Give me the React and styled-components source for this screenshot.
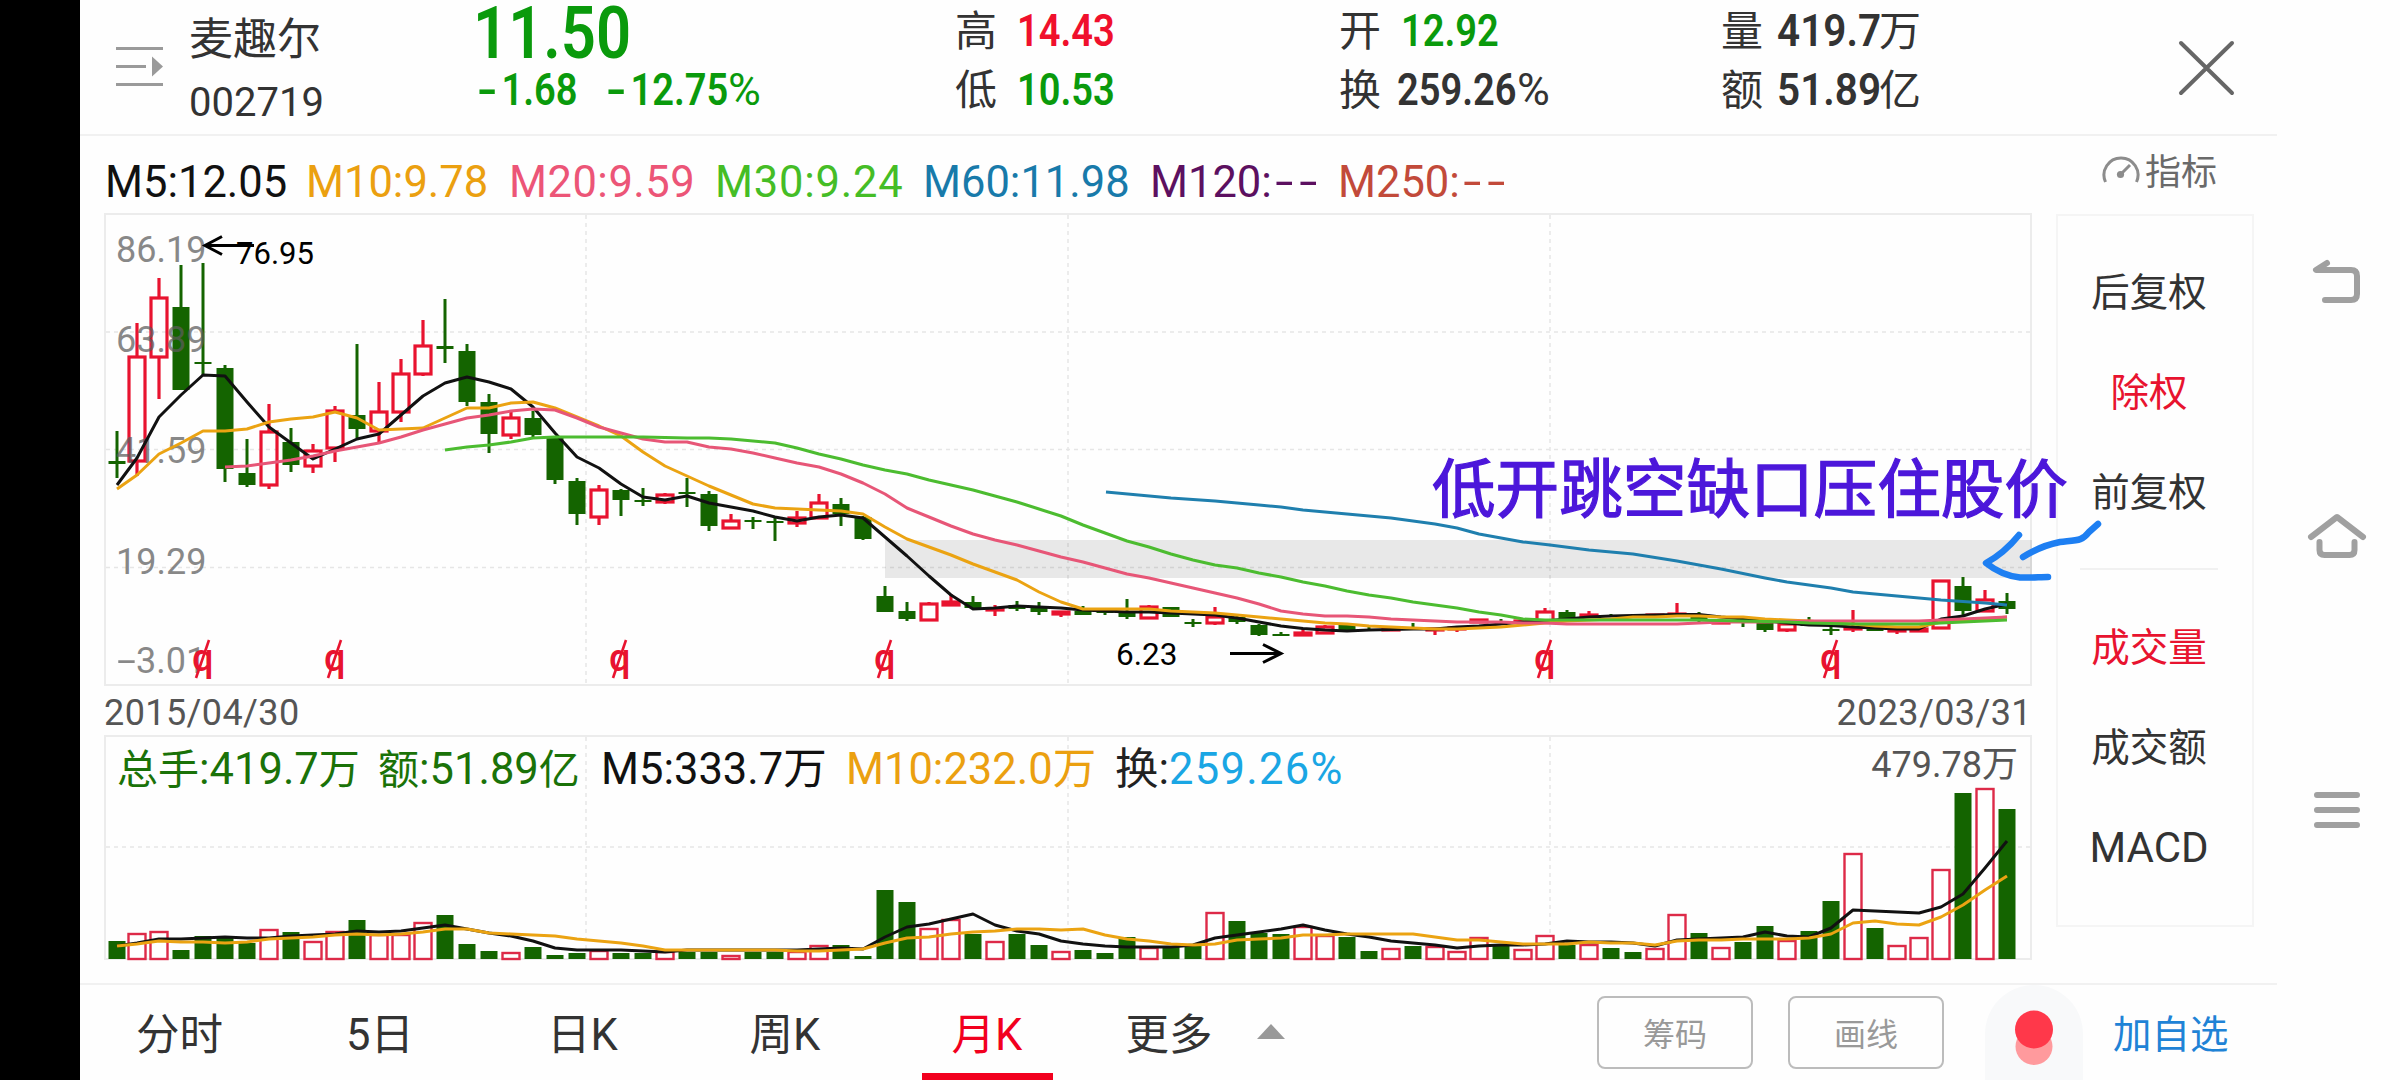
import React from "react";
import styled, { createGlobalStyle } from "styled-components";

const GlobalStyle = createGlobalStyle`
  * {
    box-sizing: border-box;
  }
  body {
    margin: 0;
    background: #fefefe;
    overflow: hidden;
    font-family: Roboto, "Noto Sans CJK SC", sans-serif;
  }
`;

const UP = "#e8132f";
const DOWN = "#146400";

const Screen = styled.div`
  width: 2400px;
  height: 1080px;
  display: flex;
  background: #fefefe;
  overflow: hidden;
`;

const Notch = styled.div`
  width: 80px;
  background: #000;
`;

const Main = styled.main`
  width: 2197px;
  display: flex;
  flex-direction: column;
`;

const Header = styled.header`
  height: 136px;
  padding-left: 36px;
  display: grid;
  grid-template-columns: 73px 284px 482px 384px 382px 457px 60px;
  border-bottom: 2px solid #f1f1f1;
`;

const MenuIcon = styled.svg`
  width: 48px;
  height: 40px;
  margin-top: 46px;
`;

const CloseIcon = styled.svg`
  width: 58px;
  height: 58px;
  margin-top: 39px;
`;

const Column = styled.div`
  display: flex;
  flex-direction: column;
  padding-top: ${(p) => p.$top || 0}px;
  white-space: nowrap;
`;

const Line = styled.div`
  display: flex;
  height: ${(p) => p.$height}px;
  line-height: ${(p) => p.$height}px;
  font-size: ${(p) => p.$size || 44}px;
  color: ${(p) => p.$color || "#333"};
`;

const Figure = styled.span`
  width: ${(p) => p.$width}px;
  font-weight: ${(p) => p.$weight || 600};
  color: ${(p) => p.$color || "#333"};
  transform: scaleX(${(p) => p.$squeeze || 0.865});
  transform-origin: left center;
`;

const QuoteLabel = styled.span`
  width: ${(p) => p.$width || 62}px;
  font-size: 42px;
`;

const Dash = styled.span`
  display: inline-block;
  width: ${(p) => p.$width || 24.5}px;
  text-align: center;
  transform: scaleX(1.5);
`;

const Body = styled.section`
  display: flex;
  height: 847px;
  padding-left: 24px;
`;

const Charts = styled.div`
  width: 1928px;
  display: flex;
  flex-direction: column;
`;

const Averages = styled.div`
  height: 77px;
  line-height: 93px;
  padding-left: 1px;
  display: grid;
  grid-template-columns: 201px 203px 206px 208px 227px 188px auto;
  font-size: 43.5px;
  letter-spacing: 0.2px;
  white-space: nowrap;
`;

const Tinted = styled.span`
  color: ${(p) => p.$color};
  letter-spacing: ${(p) => p.$spacing || 0}px;
`;

const Small = styled.span`
  font-size: 41px;
`;

const PricePanel = styled.div`
  position: relative;
  z-index: 1;
  height: 473px;
  border: 2px solid #ececec;
`;

const VolumePanel = styled.div`
  position: relative;
  height: 225px;
  border: 2px solid #ececec;
`;

const Plot = styled.svg`
  display: block;
  width: 1924px;
  height: ${(p) => p.$height}px;
  overflow: visible;
`;

const DateRow = styled.div`
  height: 49px;
  line-height: 55px;
  display: flex;
  justify-content: space-between;
  font-size: 36px;
  letter-spacing: 0.4px;
  color: #555;
`;

const VolumeLegend = styled.div`
  position: absolute;
  top: 0;
  left: 11px;
  line-height: 66px;
  display: grid;
  grid-template-columns: 261px 223px 245px 269px auto;
  font-size: 43.5px;
  white-space: nowrap;
`;

const VolumeMax = styled.div`
  position: absolute;
  top: 0;
  right: 12px;
  line-height: 57px;
  font-size: 36px;
  color: #555;
`;

const Side = styled.aside`
  width: 198px;
  margin-left: 24px;
`;

const IndicatorButton = styled.div`
  height: 78px;
  padding: 0 0 12px 46px;
  display: flex;
  align-items: center;
  gap: 5px;
  font-size: 36px;
  color: #6a6a6a;
`;

const SideMenu = styled.div`
  height: 713px;
  padding: 25px 34px 0 22px;
  border: 2px solid #f5f5f5;
`;

const SideGroup = styled.div`
  padding-top: ${(p) => p.$top || 0}px;
  border-bottom: ${(p) => (p.$last ? "none" : "2px solid #f1f1f1")};
  height: ${(p) => p.$height}px;
`;

const SideItem = styled.div`
  height: 100px;
  line-height: 104px;
  display: flex;
  justify-content: center;
  white-space: nowrap;
  font-size: ${(p) => (p.$latin ? 42 : 38.5)}px;
  color: ${(p) => (p.$active ? UP : "#333")};
`;

const Footer = styled.footer`
  height: 97px;
  display: flex;
  align-items: center;
  border-top: 2px solid #f1f1f1;
`;

const Tabs = styled.nav`
  display: grid;
  height: 95px;
  grid-template-rows: 95px;
  grid-template-columns: 199px 202px 203px 202px 202px 162px 60px;
`;

const Tab = styled.div`
  height: 95px;
  display: flex;
  justify-content: center;
  line-height: 101px;
  font-size: 43.5px;
  color: ${(p) => (p.$active ? "#f2001e" : "#333")};
`;

const ActiveTab = styled(Tab)`
  width: 131px;
  justify-self: center;
  border-bottom: 7px solid #f2001e;
`;

const Caret = styled.svg`
  width: 28px;
  height: 15px;
  margin: 39px 0 0 7px;
`;

const Spacer = styled.div`
  width: 287px;
`;

const Outline = styled.button`
  width: 156px;
  height: 73px;
  margin-right: 35px;
  padding: 0 0 2px;
  border: 2px solid #bcbcbc;
  border-radius: 8px;
  background: none;
  font-family: inherit;
  font-size: 32px;
  color: #999;
`;

const Record = styled.svg`
  width: 98px;
  height: 95px;
  margin-left: 6px;
`;

const AddLink = styled.div`
  margin-left: 30px;
  font-size: 38.5px;
  line-height: 99px;
  height: 95px;
  color: #1f83d6;
  white-space: nowrap;
`;

const SystemNav = styled.div`
  width: 123px;
  padding-right: 3px;
  display: flex;
  flex-direction: column;
  align-items: center;
`;

const NavIcon = styled.svg`
  width: 60px;
  height: 60px;
  margin-top: ${(p) => p.$top}px;
  fill: none;
  stroke: #a0a0a0;
  stroke-width: 6;
  stroke-linecap: round;
  stroke-linejoin: round;
`;

// Each candle: direction, high, body top, body bottom, low
const candles = [
  ["d", 431, 461, 464, 478], ["u", 323, 357, 461, 476], ["u", 278, 298, 357, 399],
  ["d", 265, 307, 390, 390], ["d", 263, 362, 364, 376], ["d", 365, 368, 469, 482],
  ["d", 439, 473, 485, 487], ["u", 404, 432, 485, 489], ["d", 428, 442, 465, 472],
  ["u", 444, 451, 466, 473], ["u", 406, 411, 448, 462], ["d", 344, 415, 429, 438],
  ["u", 382, 412, 431, 442], ["u", 359, 374, 412, 422], ["u", 320, 346, 374, 376],
  ["d", 299, 346, 349, 363], ["d", 344, 351, 402, 406], ["d", 394, 402, 434, 453],
  ["u", 411, 418, 435, 439], ["d", 411, 418, 435, 437], ["d", 438, 438, 480, 484],
  ["d", 478, 481, 514, 525], ["u", 485, 490, 517, 525], ["d", 489, 490, 500, 516],
  ["d", 488, 500, 502, 506], ["u", 493, 495, 502, 504], ["d", 478, 492, 494, 507],
  ["d", 491, 494, 526, 531], ["u", 514, 521, 528, 528], ["d", 517, 520, 522, 529],
  ["d", 517, 521, 523, 541], ["u", 511, 518, 523, 527], ["u", 494, 503, 518, 518],
  ["d", 498, 504, 514, 526], ["d", 516, 517, 539, 540], ["d", 586, 596, 612, 612],
  ["d", 602, 611, 619, 621], ["u", 602, 604, 620, 620], ["u", 594, 602, 605, 605],
  ["d", 596, 602, 608, 609], ["u", 605, 609, 610, 616], ["d", 601, 605, 609, 611],
  ["d", 602, 607, 612, 615], ["u", 611, 612, 614, 617], ["d", 606, 611, 615, 615],
  ["d", 611, 612, 613, 615], ["d", 599, 612, 617, 619], ["u", 605, 607, 618, 618],
  ["d", 607, 607, 617, 617], ["d", 619, 622, 624, 627], ["u", 607, 617, 623, 625],
  ["d", 616, 617, 622, 624], ["d", 624, 625, 635, 636], ["d", 632, 634, 636, 636],
  ["u", 629, 633, 635, 635], ["u", 625, 627, 633, 633], ["d", 624, 625, 631, 631],
  ["d", 627, 629, 630, 631], ["u", 629, 629, 630, 630], ["d", 623, 628, 629, 630],
  ["u", 628, 629, 630, 635], ["u", 626, 628, 629, 632], ["u", 619, 620, 622, 622],
  ["d", 619, 621, 622, 622], ["u", 620, 621, 622, 622], ["u", 608, 612, 621, 621],
  ["d", 610, 612, 620, 621], ["u", 611, 615, 616, 617], ["d", 614, 616, 617, 617],
  ["d", 614, 616, 617, 618], ["u", 614, 615, 616, 616], ["u", 603, 614, 615, 616],
  ["d", 612, 617, 621, 624], ["u", 622, 622, 623, 623], ["d", 621, 622, 623, 627],
  ["d", 622, 623, 630, 632], ["u", 623, 624, 630, 632], ["d", 617, 623, 626, 626],
  ["d", 625, 629, 631, 635], ["u", 610, 628, 629, 632], ["d", 627, 627, 631, 631],
  ["u", 628, 630, 631, 634], ["u", 627, 629, 631, 632], ["u", 580, 581, 628, 628],
  ["d", 577, 586, 611, 615], ["u", 590, 600, 611, 612], ["d", 593, 601, 609, 614],
];

const volumeTops = [
  941, 934, 932, 950, 936, 937, 943, 930, 932, 942, 932, 920, 935, 935, 923, 915,
  944, 951, 953, 947, 955, 953, 951, 953, 953, 952, 952, 952, 956, 952, 952, 952,
  946, 945, 956, 890, 902, 929, 920, 934, 942, 934, 945, 952, 950, 953, 937, 948,
  947, 945, 913, 921, 933, 934, 927, 936, 937, 951, 949, 946, 947, 952, 938, 945,
  950, 936, 945, 945, 948, 952, 949, 915, 933, 948, 942, 926, 941, 931, 901, 854,
  928, 946, 938, 870, 793, 789, 809,
];

const ma5 = [
  485, 458, 417, 395, 375, 376, 402, 427, 443, 459, 449, 439, 434, 415, 396, 383,
  377, 382, 389, 407, 433, 457, 468, 484, 497, 500, 496, 503, 507, 511, 517, 521,
  517, 515, 518, 537, 556, 576, 595, 609, 608, 606, 607, 608, 610, 611, 612, 612,
  613, 614, 615, 618, 622, 626, 628.5, 630, 631, 630, 629.5, 629, 629, 627, 626, 624,
  622, 621, 619, 617, 616, 615.5, 615, 614.5, 614.5, 617, 619, 621, 623, 625, 625.5, 627,
  628, 629, 629, 619, 616, 609, 604,
];

const ma10 = [
  489, 475, 454, 443, 431, 431, 429, 422, 419, 417, 412, 418, 430, 429, 428, 418,
  408, 408, 403, 402, 408, 417, 426, 436, 452, 466, 476, 486, 495, 504, 508, 509,
  510, 511, 514, 527, 539, 547, 555, 564, 572, 580, 592, 602, 609, 609, 609, 609,
  611, 612, 613, 615, 617, 619, 621, 623, 624, 626, 627, 628, 629, 629, 628, 627,
  625, 623, 621, 620, 619, 617, 617, 616, 616, 617, 617, 619, 620, 621, 623, 624,
  626, 627, 627, 622, 620, 619, 617,
];

const ma20 = [
  467, 466, 463, 460, 456, 451, 447, 443, 437, 430, 424, 418, 415, 411, 409, 410,
  418, 427, 433, 439, 442, 442, 447, 449, 453, 458, 463, 467, 474, 483, 494, 508,
  517, 526, 534, 540, 545, 551, 557, 562, 568, 574, 578, 583, 588, 593, 598, 604,
  611, 614, 616, 616, 617, 619, 620, 621, 622, 622, 622, 623, 623, 624, 624, 624,
  624, 624, 624, 623, 622, 622, 622, 621.5, 621, 621, 621, 621, 621, 621, 620, 619,
  618, 617,
];

const ma30 = [
  450, 447, 445, 442, 438, 437, 437, 437, 437, 437, 437.5, 438, 438, 439, 441, 443,
  448, 454, 459, 465, 470, 474, 480, 485, 490, 496, 502, 509, 516, 525, 533, 541,
  547, 554, 560, 565, 568, 573, 577, 582, 586, 591, 595, 598, 602, 605, 608, 612,
  615, 619, 620, 620, 620, 620, 620, 620, 620, 620, 620.5, 621, 621.5, 622, 623, 623.5,
  624, 624, 624, 624, 623, 622, 621, 620,
];

const ma60 =
  "1106,492 1171,498 1215,501 1259,505 1281,507 1303,510 1347,514 1391,518 1413,521 1435,524 1457,528 1479,534 1501,538 1523,542 1550,545 1589,550 1633,554 1677,561 1721,569 1765,578 1787,582 1831,588 1853,592 1897,596 1941,600 1985,603 2007,605";

const volMa5 = [
  946, 943, 939, 939, 938, 937, 938, 938, 936, 935, 934, 931, 932, 931, 928, 925,
  929, 933, 936, 941, 948, 950, 950, 950, 951, 952, 950, 950, 950, 950, 950, 950,
  949, 948, 949, 937, 927, 924, 919, 914, 925, 931, 934, 941, 944, 946, 947, 947,
  947, 945, 938, 935, 932, 929, 925, 930, 934, 937, 941, 943, 945, 948, 946, 945,
  945, 944, 941, 942, 942, 943, 946, 940, 939, 938, 937, 932, 936, 937, 928, 910,
  911, 912, 913, 907, 894, 868, 841,
];

const volMa10 = [
  946, 944, 941, 942, 942, 943, 942, 939, 938, 937, 935, 934, 935, 934, 932, 929,
  929, 933, 934, 935, 936, 939, 941, 943, 946, 950, 950, 950, 950, 950, 950, 951,
  951, 950, 949, 943, 938, 937, 934, 932, 931, 929, 929, 930, 929, 935, 939, 941,
  944, 945, 944, 940, 939, 938, 935, 935, 934, 934, 934, 934, 937, 940, 940, 942,
  944, 944, 944, 942, 943, 943, 945, 941, 940, 940, 939, 939, 939, 938, 934, 923,
  921, 924, 925, 917, 905, 890, 876,
];

const exDividend = [204, 336, 621, 886, 1546, 1832];
const gridX = [586, 1068, 1550];

const xAt = (i) => (i === 0 ? 117 : 115 + i * 22);
const toPoints = (values, start = 0) =>
  values.map((y, i) => `${xAt(i + start)},${y}`).join(" ");

const Candle = ({ index, data }) => {
  const [dir, high, top, bottom, low] = data;
  const x = xAt(index);
  if (dir === "d") {
    return (
      <g fill={DOWN}>
        <rect x={x - 1.5} y={high} width="3" height={low - high} />
        <rect x={x - 8.5} y={top} width="17" height={bottom - top} />
      </g>
    );
  }
  return (
    <g stroke={UP} strokeWidth="3.2" fill="none">
      <path d={`M${x} ${high}V${top}M${x} ${bottom}V${low}`} />
      <rect x={x - 8} y={top} width="16" height={bottom - top} />
    </g>
  );
};

const Average = ({ points, color }) => (
  <polyline points={points} fill="none" stroke={color} strokeWidth="3" strokeLinejoin="round" />
);

const GridLines = ({ rows, top, bottom }) => (
  <g stroke="#e6e6e6" strokeWidth="1.5" strokeDasharray="4 4">
    {rows.map((y) => (
      <path key={y} d={`M106 ${y}H2030`} />
    ))}
    {gridX.map((x) => (
      <path key={x} d={`M${x} ${top}V${bottom}`} />
    ))}
  </g>
);

const PriceChart = () => (
  <Plot $height={469} viewBox="106 215 1924 469">
    <GridLines rows={[332, 449.5, 567.5]} top={215} bottom={684} />
    <rect x="885" y="540" width="1147" height="38" fill="#000" opacity="0.085" />
    {candles.map((c, i) => (
      <Candle key={i} index={i} data={c} />
    ))}
    <g fontSize="36" fill="#5c5c5c" opacity="0.72">
      <text x="116" y="261.5">86.19</text>
      <text x="116" y="352">63.89</text>
      <text x="116" y="462.5">41.59</text>
      <text x="116" y="573.5">19.29</text>
      <text x="117" y="673" textLength="19" lengthAdjust="spacingAndGlyphs">-</text>
      <text x="136" y="673">3.01</text>
    </g>
    <Average points={toPoints(ma5)} color="#111" />
    <Average points={toPoints(ma10)} color="#eba312" />
    <Average points={toPoints(ma20, 5)} color="#e75677" />
    <Average points={toPoints(ma30, 15)} color="#4cbc30" />
    <Average points={ma60} color="#1f7fae" />
    <g stroke="#000" strokeWidth="3" fill="none">
      <path d="M254 245.500H205M222 236.500L205 245.500L222 254.500" />
      <path d="M1230 653.500H1281M1263 644.500L1281 653.500L1263 662.500" />
    </g>
    <g fontSize="31.5" fill="#000">
      <text x="236" y="264" textLength="78" lengthAdjust="spacingAndGlyphs">76.95</text>
      <text x="1116" y="664.5">6.23</text>
    </g>
    {exDividend.map((x) => (
      <g key={x}>
        <text x={x - 12} y="671" fontSize="38" fontWeight="500" fill={UP}>q</text>
        <path d={`M${x - 8} 678L${x + 5} 640`} stroke={UP} strokeWidth="2.6" />
      </g>
    ))}
    <text x="1432" y="511.5" fontSize="63.6" fill="#4c17da" stroke="#4c17da" strokeWidth="1.3">
      低开跳空缺口压住股价
    </text>
    <g stroke="#1e7ff2" strokeWidth="6.5" fill="none" strokeLinecap="round" strokeLinejoin="round">
      <path d="M2019 535C2010 546 1999 556 1986 563C1996 571 2006 576 2020 577.5C2030 578 2040 577 2048 577" />
      <path d="M2023 557C2034 550 2045 545 2060 542C2078 540 2082 541 2089 532L2098 524" />
    </g>
  </Plot>
);

const VolumeChart = () => (
  <Plot $height={221} viewBox="106 737 1924 221">
    <GridLines rows={[847]} top={737} bottom={958} />
    {volumeTops.map((y, i) =>
      candles[i][0] === "d" ? (
        <rect key={i} x={xAt(i) - 8.5} y={y} width="17" height={959 - y} fill={DOWN} />
      ) : (
        <rect key={i} x={xAt(i) - 8.5} y={y} width="17" height={959 - y} fill="#fff" stroke="#dd2a48" strokeWidth="2.4" />
      )
    )}
    <Average points={toPoints(volMa5)} color="#111" />
    <Average points={toPoints(volMa10)} color="#eba312" />
  </Plot>
);

const Quote = ({ label, value, color, unit, width = 95, labelWidth, squeeze }) => (
  <Line $height={59}>
    <QuoteLabel $width={labelWidth}>{label}</QuoteLabel>
    <Figure $width={width} $color={color} $squeeze={squeeze}>{value}</Figure>
    {unit === "%" && <Figure $width={34} $weight={400} $squeeze={1.02}>%</Figure>}
    {unit && unit !== "%" && <QuoteLabel>{unit}</QuoteLabel>}
  </Line>
);

const App = () => {
  return (
    <>
      <GlobalStyle />
      <Screen>
        <Notch />
        <Main>
          <Header>
            <MenuIcon viewBox="0 0 48 40" stroke="#9a9a9a" strokeWidth="3">
              <path d="M0 2.500H47M0 20.500H30M0 38.500H47" />
              <path d="M36 10.500L47 20.500L36 30.500Z" fill="#9a9a9a" stroke="none" />
            </MenuIcon>
            <Column>
              <Line $height={81}>麦趣尔</Line>
              <Line $height={43} $size={40}>002719</Line>
            </Column>
            <Column>
              <Line $height={68} $size={72}>
                <Figure $width={160} $color="#0a9a0c" $squeeze={0.855}>11.50</Figure>
              </Line>
              <Line $height={45}>
                <Figure $width={129} $color="#0a9a0c">
                  <Dash $width={33}>-</Dash>1.68
                </Figure>
                <Figure $width={126} $color="#0a9a0c">
                  <Dash $width={33}>-</Dash>12.75
                </Figure>
                <Figure $width={34} $color="#0a9a0c" $weight={400} $squeeze={1.02}>%</Figure>
              </Line>
            </Column>
            <Column $top={2}>
              <Quote label="高" value="14.43" color="#f0102c" />
              <Quote label="低" value="10.53" color="#0a9a0c" />
            </Column>
            <Column $top={2}>
              <Quote label="开" value="12.92" color="#0a9a0c" />
              <Quote label="换" value="259.26" unit="%" width={120} labelWidth={58} />
            </Column>
            <Column $top={2}>
              <Quote label="量" value="419.7" unit="万" width={102} labelWidth={56} squeeze={0.92} />
              <Quote label="额" value="51.89" unit="亿" width={102} labelWidth={56} squeeze={0.92} />
            </Column>
            <CloseIcon viewBox="0 0 58 58" stroke="#666" strokeWidth="4" strokeLinecap="round">
              <path d="M3 4L54 54M54 4L3 54" />
            </CloseIcon>
          </Header>
          <Body>
            <Charts>
              <Averages>
                <Tinted $color="#111">M5:12.05</Tinted>
                <Tinted $color="#eba010">M10:9.78</Tinted>
                <Tinted $color="#ec5577" $spacing={0.5}>M20:9.59</Tinted>
                <Tinted $color="#45bd26" $spacing={0.8}>M30:9.24</Tinted>
                <Tinted $color="#187aaa">M60:11.98</Tinted>
                <Tinted $color="#5c1060">M120:<Dash>-</Dash><Dash>-</Dash></Tinted>
                <Tinted $color="#c24a3a">M250:<Dash>-</Dash><Dash>-</Dash></Tinted>
              </Averages>
              <PricePanel>
                <PriceChart />
              </PricePanel>
              <DateRow>
                <span>2015/04/30</span>
                <span>2023/03/31</span>
              </DateRow>
              <VolumePanel>
                <VolumeChart />
                <VolumeLegend>
                  <Tinted $color="#1a7208"><Small>总手</Small>:419.7<Small>万</Small></Tinted>
                  <Tinted $color="#1a7208"><Small>额</Small>:51.89<Small>亿</Small></Tinted>
                  <Tinted $color="#111">M5:333.7万</Tinted>
                  <Tinted $color="#eba010">M10:232.0万</Tinted>
                  <Tinted $color="#222">
                    换:<Tinted $color="#1aa6e4" $spacing={1.3}>259.26%</Tinted>
                  </Tinted>
                </VolumeLegend>
                <VolumeMax>479.78万</VolumeMax>
              </VolumePanel>
            </Charts>
            <Side>
              <IndicatorButton>
                <svg width="38" height="30" viewBox="0 0 38 30" fill="none" stroke="#8c8c8c" strokeWidth="3">
                  <path d="M3.500 28A17 17 0 1 1 34.500 28" />
                  <path d="M19 20L28 11" />
                  <circle cx="18.500" cy="20.500" r="3.600" fill="#8c8c8c" stroke="none" />
                </svg>
                指标
              </IndicatorButton>
              <SideMenu>
                <SideGroup $height={329}>
                  <SideItem>后复权</SideItem>
                  <SideItem $active>除权</SideItem>
                  <SideItem>前复权</SideItem>
                </SideGroup>
                <SideGroup $height={330} $top={26} $last>
                  <SideItem $active>成交量</SideItem>
                  <SideItem>成交额</SideItem>
                  <SideItem $latin>MACD</SideItem>
                </SideGroup>
              </SideMenu>
            </Side>
          </Body>
          <Footer>
            <Tabs>
              <Tab>分时</Tab>
              <Tab>5日</Tab>
              <Tab>日K</Tab>
              <Tab>周K</Tab>
              <ActiveTab $active>月K</ActiveTab>
              <Tab>更多</Tab>
              <Caret viewBox="0 0 28 15">
                <path d="M14 0L28 15H0Z" fill="#999" />
              </Caret>
            </Tabs>
            <Spacer />
            <Outline>筹码</Outline>
            <Outline>画线</Outline>
            <Record viewBox="0 0 98 95">
              <path d="M0 95V49A49 49 0 0 1 98 49V95Z" fill="#f8f9fa" />
              <circle cx="49" cy="61.500" r="18.500" fill="#ff9a9d" />
              <circle cx="49" cy="44.500" r="19" fill="#ff384a" />
            </Record>
            <AddLink>加自选</AddLink>
          </Footer>
        </Main>
        <SystemNav>
          <NavIcon viewBox="0 0 60 60" $top={254}>
            <path d="M20 9L9 16H44Q50 16 50 22V40Q50 46 44 46H18" />
          </NavIcon>
          <NavIcon viewBox="0 0 60 60" $top={192}>
            <path d="M4 31L30 11L56 31M12.500 36V44Q12.500 49 17.500 49H42.500Q47.500 49 47.500 44V36" />
          </NavIcon>
          <NavIcon viewBox="0 0 60 60" $top={214}>
            <path d="M10 15H50M10 30H50M10 45H50" />
          </NavIcon>
        </SystemNav>
      </Screen>
    </>
  );
};

export default App;
